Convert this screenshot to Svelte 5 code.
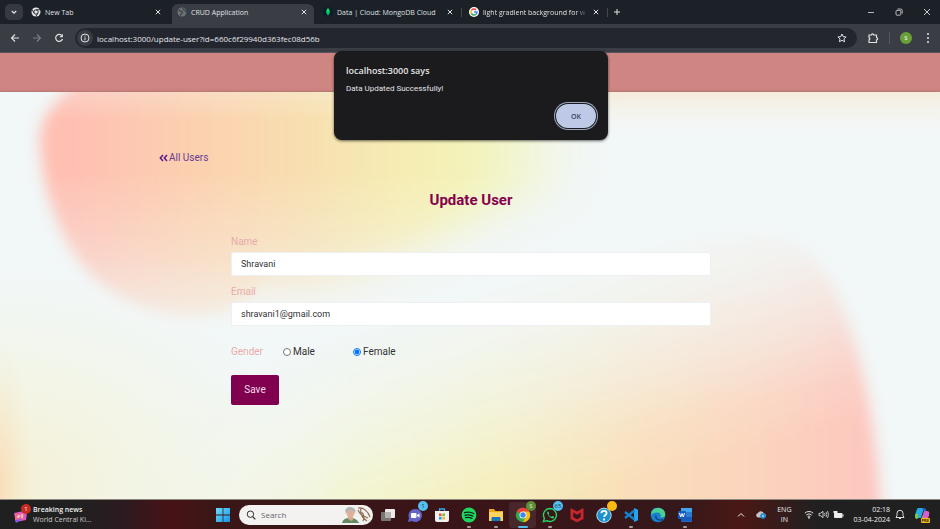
<script>
  const tabs = [
    { title: 'New Tab', icon: 'chrome' },
    { title: 'CRUD Application', icon: 'globe', active: true },
    { title: 'Data | Cloud: MongoDB Cloud', icon: 'mongo', line: true },
    { title: 'light gradient background for w', icon: 'google', line: true, long: true }
  ];
  const apps = [
    { name: 'Task view' },
    { name: 'Chat', badge: '1' },
    { name: 'Store' },
    { name: 'Spotify', open: true },
    { name: 'Explorer', open: true },
    { name: 'Chrome', badge: 'S', tone: 'green', current: true },
    { name: 'WhatsApp', badge: '65', open: true },
    { name: 'McAfee' },
    { name: 'Help', badge: ' ', tone: 'amber' },
    { name: 'Code', open: true },
    { name: 'Edge' },
    { name: 'Word', open: true }
  ];
  let name = $state('Shravani');
  let email = $state('shravani1@gmail.com');
  let gender = $state('Female');
</script>

<div class="screen">
  <div class="tabstrip">
    <button class="search-tabs" aria-label="Search tabs">
      <svg width="8" height="8" viewBox="0 0 8 8"><path d="M1.8 3 4 5.2 6.2 3" fill="none" stroke="#dfe1e5" stroke-width="1.3" /></svg>
    </button>
    {#each tabs as tab}
      <div class="tab" class:active={tab.active} class:line={tab.line}>
        <svg class="fav" viewBox="0 0 20 20">
          {#if tab.icon === 'chrome'}
            <circle cx="10" cy="10" r="9" fill="#e3e5e8" />
            <circle cx="10" cy="10" r="4.4" fill="#e3e5e8" stroke="#1d2027" stroke-width="1.8" />
            <path d="M10 5.6h8.2M6.2 12.2 2 5M13.8 12.2 9.6 19" stroke="#1d2027" stroke-width="1.8" />
          {:else if tab.icon === 'globe'}
            <circle cx="10" cy="10" r="9" fill="#6d7178" />
            <path d="M3 6c3 0 3 3 6 3s2 3 0 4-1 4-3 4M12 2c-1 3 1 4 3 4s1 4 4 4" fill="none" stroke="#3b3d45" stroke-width="2.2" />
          {:else if tab.icon === 'mongo'}
            <circle cx="10" cy="10" r="10" fill="#04202b" />
            <path d="M10 2c5 5 4 11 0 14-4-3-5-9 0-14z" fill="#08e76a" /><path d="M10 9v9" stroke="#0a8f49" stroke-width="1.2" />
          {:else}
            <circle cx="10" cy="10" r="10" fill="#fff" />
            <g fill="none" stroke-width="3"><path d="M14.3 5.8A6 6 0 0 0 4.8 7" stroke="#ea4335" /><path d="M4.8 7a6 6 0 0 0 0 6" stroke="#fbbc05" /><path d="M4.8 13a6 6 0 0 0 9.2 1.4" stroke="#34a853" /><path d="M14 14.4a6 6 0 0 0 2-4.2h-6" stroke="#4285f4" /></g>
          {/if}
        </svg>
        <span class="title" class:long={tab.long}>{tab.title}</span>
        <button class="close" aria-label="Close {tab.title}">
          <svg width="8" height="8" viewBox="0 0 8 8"><path d="m1.8 1.8 4.4 4.4m0-4.4L1.8 6.2" stroke="#dfe1e5" /></svg>
        </button>
      </div>
    {/each}
    <button class="plus" aria-label="New tab"><svg width="8" height="8" viewBox="0 0 8 8"><path d="M4 1v6M1 4h6" stroke="#dfe1e5" /></svg></button>
    <div class="window">
      <button aria-label="Minimize"><svg width="8" height="8" viewBox="0 0 8 8"><path d="M1 4.5h6" stroke="#dfe1e5" stroke-width=".8" /></svg></button>
      <button aria-label="Restore"><svg width="8" height="8" viewBox="0 0 8 8"><g fill="none" stroke="#dfe1e5" stroke-width=".8"><rect x="1" y="2.4" width="4.8" height="4.8" rx="1" /><path d="M2.6 1h3a1.6 1.6 0 0 1 1.6 1.6v3" /></g></svg></button>
      <button aria-label="Close window"><svg width="8" height="8" viewBox="0 0 8 8"><path d="m1 1 6 6m0-6L1 7" stroke="#dfe1e5" stroke-width=".9" /></svg></button>
    </div>
  </div>

  <div class="toolbar">
    <button aria-label="Back"><svg width="10" height="10" viewBox="0 0 10 10"><path d="M9 5H1.6M5 1.5 1.5 5 5 8.5" fill="none" stroke="#dfe1e5" stroke-width="1.1" /></svg></button>
    <button aria-label="Forward"><svg width="10" height="10" viewBox="0 0 10 10"><path d="M1 5h7.4M5 1.5 8.5 5 5 8.5" fill="none" stroke="#7c7f86" stroke-width="1.1" /></svg></button>
    <button aria-label="Reload"><svg width="10" height="10" viewBox="0 0 10 10"><path d="M8 2.8A3.5 3.5 0 1 0 8.5 6" fill="none" stroke="#dfe1e5" stroke-width="1.2" /><path d="M8.8.8V4.3H5.3z" fill="#dfe1e5" /></svg></button>
    <div class="address">
      <span class="info"><svg width="10" height="10" viewBox="0 0 10 10"><circle cx="5" cy="5" r="4" fill="none" stroke="#dfe1e5" /><path d="M5 4.5v2.7M5 2.7v1" stroke="#dfe1e5" /></svg></span>
      <input aria-label="Address" value="localhost:3000/update-user?id=660c6f29940d363fec08d56b" />
      <button aria-label="Bookmark"><svg width="10" height="10" viewBox="0 0 20 20"><path d="m10 2 2.4 5.3 5.8.6-4.3 3.9 1.2 5.7-5.1-2.9-5.1 2.9 1.2-5.7L1.8 7.9l5.8-.6z" fill="none" stroke="#dfe1e5" stroke-width="2" /></svg></button>
    </div>
    <button class="ext" aria-label="Extensions"><svg width="12" height="12" viewBox="0 0 24 24"><path d="M4 6h5a2.2 2.2 0 0 1 4.4 0H19v5a2.2 2.2 0 0 1 0 4.5V21H4v-5.2a2.4 2.4 0 0 0 0-4.6z" fill="none" stroke="#dfe1e5" stroke-width="2.4" /></svg></button>
    <div class="profile"><button class="avatar" aria-label="Profile">S</button></div>
    <button class="kebab" aria-label="Menu"><svg width="4" height="12" viewBox="0 0 4 12"><g fill="#dfe1e5"><circle cx="2" cy="2" r="1" /><circle cx="2" cy="6" r="1" /><circle cx="2" cy="10" r="1" /></g></svg></button>
  </div>

  <header></header>

  <main>
    <svg class="backdrop" viewBox="0 0 940 407" preserveAspectRatio="none" aria-hidden="true">
      <defs>
        <filter id="soft" x="-20%" y="-20%" width="140%" height="140%"><feGaussianBlur stdDeviation="7" /></filter>
        <filter id="wide" x="-20%" y="-30%" width="140%" height="160%"><feGaussianBlur stdDeviation="20" /></filter>
        <linearGradient id="warm" gradientUnits="userSpaceOnUse" x1="40" y1="0" x2="590" y2="0">
          <stop offset="0" stop-color="#ffbfb2" /><stop offset=".08" stop-color="#fec1b3" /><stop offset=".27" stop-color="#fcd0af" />
          <stop offset=".47" stop-color="#f8deb0" /><stop offset=".68" stop-color="#f5eeb3" /><stop offset=".78" stop-color="#f3f3b9" /><stop offset=".88" stop-color="#f1f5d2" />
          <stop offset="1" stop-color="#f2f7f0" stop-opacity="0" />
        </linearGradient>
        <linearGradient id="down" x1="0" y1="0" x2="0" y2="1">
          <stop offset="0" stop-color="#fff" stop-opacity=".75" /><stop offset=".1" stop-color="#fff" /><stop offset=".3" stop-color="#fff" /><stop offset=".6" stop-color="#fff" stop-opacity=".68" /><stop offset="1" stop-color="#fff" stop-opacity="0" />
        </linearGradient>
        <mask id="fade" maskUnits="userSpaceOnUse" x="0" y="0" width="640" height="270"><rect width="640" height="270" fill="url(#down)" /></mask>
        <linearGradient id="low" gradientUnits="userSpaceOnUse" x1="120" y1="0" x2="880" y2="0">
          <stop offset="0" stop-color="#f4f5dc" stop-opacity="0" /><stop offset=".3" stop-color="#f3f4c6" /><stop offset=".48" stop-color="#f5efb8" />
          <stop offset=".67" stop-color="#f9dfb9" /><stop offset=".86" stop-color="#fbd2be" /><stop offset="1" stop-color="#fdc6bf" />
        </linearGradient>
        <linearGradient id="up" gradientUnits="userSpaceOnUse" x1="560" y1="410" x2="500" y2="195">
          <stop offset="0" stop-color="#fff" /><stop offset=".2" stop-color="#fff" stop-opacity=".85" /><stop offset=".45" stop-color="#fff" stop-opacity=".5" /><stop offset=".75" stop-color="#fff" stop-opacity=".17" /><stop offset="1" stop-color="#fff" stop-opacity="0" />
        </linearGradient>
        <mask id="rise" maskUnits="userSpaceOnUse" x="60" y="80" width="880" height="327"><rect x="60" y="80" width="880" height="327" fill="url(#up)" /></mask>
        <linearGradient id="brow" x1="0" y1="0" x2="0" y2="1"><stop offset="0" stop-color="#f6ecdc" /><stop offset="1" stop-color="#f4f3ee" stop-opacity="0" /></linearGradient>
        <radialGradient id="haze"><stop offset="0" stop-color="#f6efd0" stop-opacity=".9" /><stop offset=".5" stop-color="#f3f4e0" stop-opacity=".7" /><stop offset="1" stop-color="#f3f5e6" stop-opacity="0" /></radialGradient>
        <radialGradient id="corner"><stop offset="0" stop-color="#fad8b2" stop-opacity=".8" /><stop offset="1" stop-color="#f7e8c6" stop-opacity="0" /></radialGradient>
      </defs>
      <rect width="940" height="407" fill="#f2f7f7" />
      <rect x="520" width="420" height="40" fill="url(#brow)" />
      <ellipse cx="0" cy="390" rx="300" ry="210" fill="url(#haze)" />
      <ellipse cx="0" cy="390" rx="34" ry="140" fill="url(#corner)" />
      <g mask="url(#fade)">
        <path d="M150-40V150c60 60 160 60 220 30 80-30 130-70 210-80V-40z" fill="url(#warm)" filter="url(#wide)" />
        <path d="M88-20C60 5 40 20 40 48c2 60 26 110 56 140 45 38 110 50 150 20 40-60 70-90 80-120V-20z" fill="url(#warm)" filter="url(#soft)" />
      </g>
      <g mask="url(#rise)">
        <path d="M60 430V330C300 310 560 90 790 150c50 20 84 130 92 280z" fill="url(#low)" filter="url(#soft)" />
      </g>
    </svg>
    <div class="content">
      <a class="back" href="#users">
        <svg width="9" height="8" viewBox="0 0 9 8"><path d="M4 1 1.3 4 4 7M8 1 5.3 4 8 7" fill="none" stroke="#551a8b" stroke-width="1.5" /></svg>All Users
      </a>
      <h1>Update User</h1>
      <form onsubmit={(e) => e.preventDefault()}>
        <label class="pink" for="name">Name</label>
        <input class="field" id="name" type="text" bind:value={name} />
        <label class="pink" for="email">Email</label>
        <input class="field" id="email" type="text" bind:value={email} />
        <div class="gender" role="radiogroup" aria-labelledby="gender">
          <span class="pink" id="gender">Gender</span>
          <label><input type="radio" name="gender" value="Male" bind:group={gender} />Male</label>
          <label><input type="radio" name="gender" value="Female" bind:group={gender} />Female</label>
        </div>
        <button class="save">Save</button>
      </form>
    </div>
  </main>

  <div class="dialog" role="alertdialog" aria-labelledby="says" aria-describedby="message">
    <strong id="says">localhost:3000 says</strong>
    <p id="message">Data Updated Successfully!</p>
    <button>OK</button>
  </div>

  <footer>
    <button class="news">
      <span class="icon">
        <svg width="16" height="16" viewBox="0 0 16 16"><path d="M1 6 11 4l3 2-1 7-10 2z" fill="#d957c8" /><path d="m2 7 9-1v6l-9 1z" fill="#f36a8d" /><path d="m2 13 7-1-6 4z" fill="#7a5cf0" /><path d="M4 10h2V8M8 8h2M8 10h2" stroke="#fff" fill="none" /></svg>
        <b class="badge red">1</b>
      </span>
      <span class="headline"><b>Breaking news</b><span>World Central Ki...</span></span>
    </button>
    <div class="apps">
      <button class="app" aria-label="Start"><svg width="16" height="16" viewBox="0 0 16 16"><defs><linearGradient id="win" x1="0" y1="0" x2="1" y2="1"><stop stop-color="#6bdcfb" /><stop offset="1" stop-color="#1595ea" /></linearGradient></defs><path d="M1 1h6.6v6.6H1zM8.4 1H15v6.6H8.4zM1 8.4h6.6V15H1zM8.4 8.4H15V15H8.4z" fill="url(#win)" /></svg></button>
      <label class="search">
        <svg width="10" height="10" viewBox="0 0 10 10"><circle cx="4.4" cy="4.2" r="3.2" fill="none" stroke="#303030" /><path d="m6.7 6.6 2.6 2.8" stroke="#303030" stroke-width="1.2" /></svg>
        <input type="text" placeholder="Search" aria-label="Search" />
        <svg width="30" height="18" viewBox="0 0 30 18"><path d="M0 17c1-4 4-5 8-5s7 1 9 5z" fill="#638a61" /><path d="M6 10h5v4l-2 1-3-2z" fill="#d9a58c" /><ellipse cx="8.5" cy="7" rx="3.8" ry="5" fill="#dfb19a" /><path d="M4 8C2 3 5 1 8 1s7 2 5 7c-1-3-2-4-4-4S5 5 4 8z" fill="#aeb4b7" /><path d="M16 2c5-1 10 3 12 9M16 4c2 5 5 6 10 8M19 2c-1 5 1 10 6 13M18 7c3-2 5 4 3 8" fill="none" stroke="#8f6c50" stroke-width="1.2" /></svg>
      </label>
      {#each apps as app}
        <button class="app" class:current={app.current} class:open={app.open} aria-label={app.name}>
          <svg width="16" height="16" viewBox="0 0 16 16">
            {#if app.name === 'Task view'}
              <rect x="1" y="5" width="10" height="9" rx="1" fill="#7b7675" /><rect x="5" y="2" width="10" height="9" rx="1" fill="#eceaea" /><path d="M5 5h6v6H5z" fill="#b5b1b0" />
            {:else if app.name === 'Chat'}
              <path d="M8 2a6.5 6.5 0 1 1-3 12L1 15l1-4A6.5 6.5 0 0 1 8 2z" fill="#6464c8" /><rect x="4" y="6" width="5.5" height="5" rx="1" fill="#fff" /><path d="m10 8 2.5-1.5v4L10 9z" fill="#fff" />
            {:else if app.name === 'Store'}
              <path d="M5.5 4V2h5v2" fill="none" stroke="#35a5e5" stroke-width="1.3" /><path d="M1 4h14v9a2 2 0 0 1-2 2H3a2 2 0 0 1-2-2z" fill="#f3f1f0" /><path d="M5 6.5h2.6v2.6H5z" fill="#ed5337" /><path d="M8.4 6.5H11v2.6H8.4z" fill="#7cbb2d" /><path d="M5 9.9h2.6v2.6H5z" fill="#21a0e6" /><path d="M8.4 9.9H11v2.6H8.4z" fill="#f8b922" />
            {:else if app.name === 'Spotify'}
              <circle cx="8" cy="8" r="7.4" fill="#1ed760" /><path d="M3.5 5.7c3-1 6.5-.7 9.2.8M4 8.3c3-.8 5.5-.4 7.8.8M4.5 10.7c2.5-.6 4.5-.3 6.4.7" fill="none" stroke="#13261a" stroke-width="1.3" stroke-linecap="round" />
            {:else if app.name === 'Explorer'}
              <path d="M1 2h5l1.500 2H15v10H1z" fill="#e8a91c" /><path d="M1 5h14v9H1z" fill="#ffd45e" /><path d="M3.5 14v-3a1 1 0 0 1 1-1h7a1 1 0 0 1 1 1v3z" fill="#1975bd" />
            {:else if app.name === 'Chrome'}
              <circle cx="8" cy="8" r="7.2" fill="#34a853" /><path d="M8 8 1.800 4.400a7.200 7.200 0 0 1 12.400 0z" fill="#ea4335" /><path d="M8 4.400h6.200A7.200 7.200 0 0 1 8 15.200l3-5.400z" fill="#fbbc05" /><circle cx="8" cy="8" r="3.5" fill="#fff" /><circle cx="8" cy="8" r="2.7" fill="#4285f4" />
            {:else if app.name === 'WhatsApp'}
              <path d="M8 1.5A6.5 6.5 0 1 1 4.8 13.700L1.400 14.600l1-3.300A6.500 6.500 0 0 1 8 1.500z" fill="none" stroke="#25d366" stroke-width="1.4" /><path d="M5.500 4.500c-1.500 1.500 2 7 5.500 7 1.500-.5 1.300-1.600.6-2l-1.400-.6-1 .9C8 9.500 7 8.500 6.500 7.500l.7-1-.6-1.800z" fill="#25d366" />
            {:else if app.name === 'McAfee'}
              <path d="M1.500 1 8 4.500 14.500 1v11L8 15.300 1.500 12zM4.300 5.500v4.800L8 12.200l3.700-1.900V5.500L8 7.700z" fill="#c8262e" fill-rule="evenodd" />
            {:else if app.name === 'Help'}
              <circle cx="8" cy="8.300" r="7.200" fill="#1a91d1" stroke="#e9f6fd" stroke-width=".8" /><path d="M5.400 6.300c0-3.200 5.200-3.200 5.200 0 0 1.800-2.500 1.800-2.500 3.800M8 11.600v1.800" fill="none" stroke="#fff" stroke-width="1.8" />
            {:else if app.name === 'Code'}
              <path d="m11 1 4 1.800v10.400L11 15z" fill="#29a4ee" /><path d="M11.500 3.500 2 11M11.500 12.500 2 5" fill="none" stroke="#1283cf" stroke-width="2.3" />
            {:else if app.name === 'Edge'}
              <circle cx="8" cy="8" r="7.300" fill="#1b7fd0" /><path d="M1 7C2-1 15-1 15.300 7.500c0 3-3.500 3.500-5 2.200 1.300-2-.3-4.200-3-4.200C4 5.400 2 6.300 1 8z" fill="#4bcf8e" /><path d="M1 8C1 2 6 0 9 1c-4 0-6 2-8 7z" fill="#32b5dd" /><path d="M6 8.500c-1 3.500 3 5.700 7 4" fill="none" stroke="#0b4688" stroke-width="1.4" />
            {:else}
              <rect x="4" y="1" width="11" height="14" rx="1" fill="#2b7cd3" /><path d="M4 1h11v4H4z" fill="#41a5ee" /><path d="M4 10h11v4.500H4z" fill="#185abd" /><rect x="1" y="4" width="8" height="8" rx="1" fill="#185abd" /><path d="m2.500 6 1.200 4L5 6.500 6.300 10l1.200-4" fill="none" stroke="#fff" />
            {/if}
          </svg>
          {#if app.badge}<b class="badge {app.tone ?? 'blue'}">{app.badge}</b>{/if}
        </button>
      {/each}
    </div>
    <div class="tray">
      <svg width="8" height="8" viewBox="0 0 8 8"><path d="m1 5.500 3-3 3 3" fill="none" stroke="#eee" /></svg>
      <svg width="11" height="9" viewBox="0 0 11 9"><path d="M3 7.500a2.300 2.300 0 0 1 0-4.500 3 3 0 0 1 5.700.5A2 2 0 0 1 9 7.500z" fill="#c9c4c4" /><circle cx="8" cy="6" r="2.800" fill="#1d8bd8" /><path d="M7 6h2M8 5v2" stroke="#fff" stroke-width=".6" /></svg>
      <span class="lang">ENG<br />IN</span>
      <span class="status">
        <svg width="10" height="9" viewBox="0 0 10 9"><path d="M.8 3.200a6 6 0 0 1 8.400 0M2.300 5a4 4 0 0 1 5.400 0M3.600 6.600a2 2 0 0 1 2.800 0" fill="none" stroke="#ddd" /><circle cx="5" cy="7.800" r=".9" fill="#eee" /></svg>
        <svg width="11" height="9" viewBox="0 0 11 9"><path d="M1 3.300h1.500L5 1.300v6.400L2.500 5.700H1z" fill="none" stroke="#eee" stroke-width=".8" /><path d="M6.500 3q1 1.500 0 3M8 1.900q1.800 2.600 0 5.200M9.500 1q2.200 3.500 0 7" fill="none" stroke="#ddd" stroke-width=".8" /></svg>
        <svg width="11" height="9" viewBox="0 0 11 9"><rect x="1" y="3" width="8.500" height="5" rx="1" fill="#eee" /><path d="M10 4.500v2" stroke="#eee" /><path d="M1 1v2h3V1" stroke="#eee" fill="#eee" /></svg>
      </span>
      <span class="clock">02:18<br />03-04-2024</span>
      <svg width="10" height="11" viewBox="0 0 10 11"><path d="M1 8.500 2 6.500V4.300a3 3 0 0 1 6 0v2.200l1 2zM4 9.500h2" fill="none" stroke="#eee" stroke-width=".9" /></svg>
      <span class="copilot">
        <svg width="16" height="16" viewBox="0 0 16 16"><path d="M5 1h5L7 11H3c-3 0-2-3-1-6s1-4 3-4z" fill="#27a9e1" /><path d="M1.500 7h3L3.500 12C1 12 .5 10 1.500 7z" fill="#79c943" /><path d="M8 1h2c2 0 2 2 2.500 3H9.500z" fill="#2563c9" /><path d="M10 4h3c3 0 2.500 3 1.500 6s-2 4-4 4H7z" fill="#d460ce" /><path d="m9 8-2 6h4z" fill="#f28a62" /></svg>
        <b>PRE</b>
      </span>
    </div>
  </footer>
</div>

<style>
  :global(body) { margin: 0; }
  * { box-sizing: border-box; }
  button, input { font: inherit; color: inherit; border: 0; padding: 0; margin: 0; background: none; outline: 0; }
  svg { display: block; flex: none; }
  .screen { position: relative; min-height: 100vh; display: flex; flex-direction: column; font-family: "Open Sans", "Noto Sans", sans-serif; }

  .tabstrip { display: flex; align-items: center; height: 24px; padding-left: 5px; background: #1c2027; color: #dfe1e5; font-size: 7px; }
  .search-tabs { width: 18px; height: 16px; margin-right: 3px; display: grid; place-items: center; border-radius: 5px; background: #363941; }
  .tab { width: 146px; height: 20px; align-self: end; display: flex; align-items: center; gap: 4px; padding: 0 10px 4px 5px; position: relative; }
  .tab.active { background: #3b3d45; clip-path: inset(0 4px 0 0 round 6px 6px 0 0); }
  .tab.line::after { content: ""; position: absolute; right: 2px; top: 4px; height: 9px; border-right: 1px solid #43464e; }
  .fav { width: 10px; height: 10px; }
  .title { flex: 1; white-space: nowrap; }
  .title.long { mask-image: linear-gradient(90deg, #000 88%, #0003 97%); }
  .plus { margin-left: 3px; }
  .window { margin-left: auto; display: flex; gap: 20px; padding-right: 9px; }

  .toolbar { display: flex; align-items: center; height: 29px; padding: 0 10px; gap: 12px; background: #3b3d45; border-bottom: 1px solid #55565d; color: #e4e5e9; }
  .address { flex: 1; height: 20px; display: flex; align-items: center; margin-left: -1px; padding: 0 10px 0 2px; border-radius: 10px; background: #23262e; font-size: 8px; }
  .info { width: 16px; height: 16px; display: grid; place-items: center; border-radius: 50%; background: #3a3c43; }
  .address input { flex: 1; margin-left: 4px; min-width: 0; }
  .ext { margin-left: -2px; }
  .profile { display: flex; margin-left: -2px; padding-left: 10px; border-left: 1px solid #55585f; }
  .avatar { width: 12px; height: 12px; border-radius: 50%; background: #689f38; color: #fff; font-size: 6px; line-height: 12px; }
  .kebab { margin-left: 2px; }

  header { height: 39px; background: #cf8582; }

  main { position: relative; flex: 1; padding-left: 2px; font-family: Roboto, sans-serif; font-size: 10px; line-height: 12px; color: #333; background: #f2f7f7; box-shadow: 0 0 3px #9a6a66; }
  .backdrop { position: absolute; inset: 0; width: 100%; height: 100%; }
  .content { position: relative; max-width: 624px; margin: 0 auto; padding: 60px 0 20px; }
  .back { display: inline-flex; align-items: center; gap: 1px; color: #6a3a94; text-decoration: none; }
  h1 { margin: 25px 0 26px; text-align: center; font-size: 15px; line-height: 20px; color: #85004e; }
  form { max-width: 480px; margin: 0 auto; }
  .pink { display: block; color: #e9abab; }
  .field { display: block; width: 100%; height: 24px; margin: 4px 0 10px; padding: 0 9px; background: #fff; border: 1px solid #eef0f4; border-radius: 1px; font-size: 9px; }
  .gender { display: flex; align-items: center; margin: 20px 0 17px; }
  .gender .pink { width: 52px; }
  .gender label { width: 70px; display: flex; align-items: center; gap: 2px; }
  .gender input { width: 8px; height: 8px; accent-color: #0075ff; }
  .save { width: 48px; height: 30px; border-radius: 2px; background: #80004f; color: #f4dcea; }

  .dialog { position: absolute; top: 51px; left: 50%; transform: translateX(-50%); margin-left: 1px; width: 274px; display: flex; flex-direction: column; padding: 12px 12px 11px; border-radius: 8px; background: #1b1b1d; color: #e4e4e6; box-shadow: 0 1px 3px #0009; }
  .dialog strong { font-size: 9px; line-height: 16px; font-weight: 600; }
  .dialog p { margin: 4px 0 8px; font-family: Roboto, sans-serif; font-size: 8px; line-height: 12px; }
  .dialog button { align-self: end; width: 40px; height: 24px; margin: 1px 0 1px; border-radius: 12px; background: #bdc9e6; color: #39455c; font-size: 7px; font-weight: 600; box-shadow: 0 0 0 1px #1b1b1d, 0 0 0 2px #9ba8c0; }

  footer { display: flex; align-items: center; height: 30px; color: #eee; font-size: 7px; line-height: 10px; background: linear-gradient(90deg, #202020 8%, #2b1b20 13%, #471216 18%, #3a1716 23%, #3a1418 50%, #35181b 72%, #4a1815 79%, #202020 87%); border-top: 1px solid #8b8880; position: relative; }
  .news { flex: 0 0 209px; display: flex; align-items: center; gap: 4px; padding-left: 13px; text-align: left; }
  .icon, .app, .copilot { position: relative; }
  .headline { display: flex; flex-direction: column; }
  .headline b { font-weight: 600; }
  .headline span { color: #ccc; }
  .badge { position: absolute; top: -1px; right: 0; min-width: 10px; height: 10px; padding: 0 1px; border-radius: 5px; font-size: 6px; line-height: 10px; font-weight: 400; text-align: center; }
  .red { background: #c52b1f; color: #fff; }
  .blue { background: #54bff0; color: #12384c; }
  .green { background: #5c8f36; color: #e2efd5; }
  .amber { background: #fdbb12; }
  .icon .badge { top: -3px; right: -2px; }
  .apps { display: flex; align-items: center; }
  .app { width: 27px; height: 26px; display: grid; place-items: center; }
  .app.current { background: #ffffff14; border-radius: 3px; }
  .app.open::after, .app.current::after { content: ""; position: absolute; bottom: 0; width: 4px; height: 2px; border-radius: 1px; background: #a89a9b; }
  .app.current::after { width: 10px; background: #55b7ee; }
  .search { width: 134px; height: 20px; display: flex; align-items: center; gap: 5px; margin: 0 1px 0 3px; padding: 0 1px 0 7px; border-radius: 10px; background: #f4f1f1; color: #555; font-size: 8px; }
  .search input { flex: 1; min-width: 0; }
  .search input::placeholder { color: #666; opacity: 1; }
  .tray { margin-left: auto; display: flex; align-items: center; padding-right: 10px; }
  .lang { margin: 0 13px 0 11px; text-align: center; }
  .tray > svg:nth-child(2) { margin-left: 10px; }
  .status { display: flex; gap: 4px; }
  .clock { margin: 0 5px 0 9px; text-align: right; }
  .copilot { margin-left: 9px; }
  .copilot b { position: absolute; right: 0; bottom: 0; padding: 0 1px; border-radius: 1px; background: #f4bb18; color: #332500; font-size: 4px; line-height: 5px; }
</style>
